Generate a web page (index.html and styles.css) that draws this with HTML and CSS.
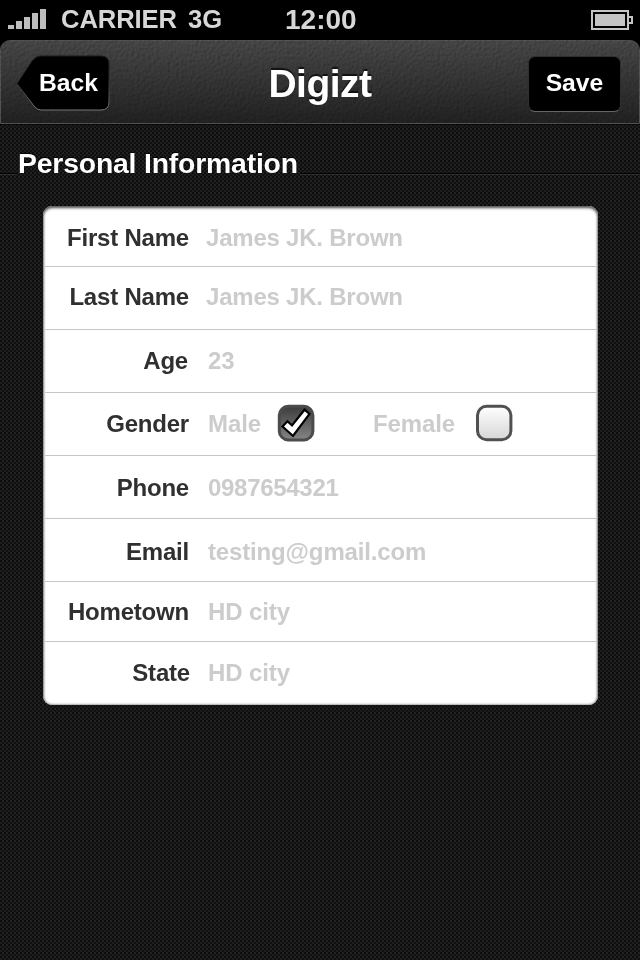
FILE: index.html
```html
<!DOCTYPE html>
<html lang="en">
<head>
<meta charset="utf-8">
<title>Digizt</title>
<link rel="stylesheet" href="styles.css">
</head>
<body>
<div class="status">
  <svg class="signal" width="38" height="20" viewBox="0 0 38 20"><path fill="#bdbdbd" d="M0 16h6v4H0zM8 12h6v8H8zM16 8h6v12h-6zM24 4h6v16h-6zM32 0h6v20h-6z"/></svg>
  <span class="carrier">CARRIER</span><span class="network">3G</span>
  <span class="clock">12:00</span>
  <svg class="battery" width="42" height="20" viewBox="0 0 42 20"><path d="M1 1h36v18H1zM37 7h4v6h-4" fill="none" stroke="#c4c4c4" stroke-width="2"/><path d="M4 4h30v12H4z" fill="#c4c4c4"/></svg>
</div>
<header class="navbar">
  <svg class="leather" width="640" height="84">
    <filter id="grain" x="0" y="0" width="100%" height="100%" color-interpolation-filters="sRGB">
      <feTurbulence type="fractalNoise" baseFrequency=".36 .32" numOctaves="2" seed="8"/>
      <feColorMatrix values="0 0 0 0 0  0 0 0 0 0  0 0 0 0 0  1 0 0 0 0"/>
      <feDiffuseLighting surfaceScale="1" diffuseConstant=".72" lighting-color="#ffffff"><feDistantLight azimuth="225" elevation="45"/></feDiffuseLighting>
    </filter>
    <rect width="640" height="84" filter="url(#grain)"/>
  </svg>
  <a class="back">
    <svg class="back-shape" width="94" height="56" viewBox="0 0 94 56"><defs><linearGradient id="edge" x2="0" y2="1"><stop stop-color="#191919"/><stop offset=".5" stop-color="#333"/><stop offset="1" stop-color="#777"/></linearGradient></defs><path d="M.8 28.500 16 6Q20 1 25 1H85Q93 1 93 9V47Q93 55 85 55H25Q21 55 18 51Z" fill="#000" stroke="url(#edge)"/></svg>
    <span>Back</span>
  </a>
  <h1>Digizt</h1>
  <a class="save">Save</a>
</header>
<main>
  <div class="section"><i class="rule lead"></i><h2>Personal Information</h2><i class="rule"></i></div>
  <div class="form">
    <div class="row first"><b>First Name</b><span>James JK. Brown</span></div>
    <div class="row last-name"><b>Last Name</b><span>James JK. Brown</span></div>
    <div class="row age"><b>Age</b><span>23</span></div>
    <div class="row gender"><b>Gender</b><span class="male">Male</span>
      <svg class="check" width="38" height="38" viewBox="0 0 38 38"><defs><linearGradient id="dark" x2="0" y2="1"><stop stop-color="#3c3c3c"/><stop offset="1" stop-color="#858585"/></linearGradient></defs><rect x="2.3" y="2.3" width="33.6" height="33.6" rx="9" fill="url(#dark)" stroke="#4b4b4b" stroke-width="3"/><path d="M5.500 22.500 10.500 17.300 15 21.500 27.500 5.700 32.500 10 16 32Z" fill="#fff" stroke="#000" stroke-width="2.2"/></svg>
      <span class="female">Female</span>
      <svg class="check" width="38" height="38" viewBox="0 0 38 38"><defs><linearGradient id="light" x2="0" y2="1"><stop stop-color="#fff"/><stop offset="1" stop-color="#d6d6d6"/></linearGradient></defs><rect x="2.5" y="2.3" width="33.4" height="33.4" rx="9" fill="url(#light)" stroke="#505050" stroke-width="3"/></svg>
    </div>
    <div class="row phone"><b>Phone</b><span>0987654321</span></div>
    <div class="row email"><b>Email</b><span>testing@gmail.com</span></div>
    <div class="row town"><b>Hometown</b><span>HD city</span></div>
    <div class="row state"><b>State</b><span>HD city</span></div>
  </div>
</main>
</body>
</html>
```
FILE: styles.css
```css
* { box-sizing: border-box; }
body {
  margin: 0;
  width: 640px;
  height: 960px;
  overflow: hidden;
  font-family: "Liberation Sans", Arial, sans-serif;
  font-weight: bold;
  background-color: #141414;
  background-image:
    conic-gradient(#222 25%, #101010 0 50%, #1d1d1d 0 75%, #0c0c0c 0);
  background-size: 4px 4px;
}
svg { display: block; flex: none; }
.status {
  display: flex;
  align-items: center;
  height: 40px;
  padding: 0 7px 0 8px;
  background: #000;
  color: #d7d7d7;
  font-size: 25.6px;
  line-height: 38px;
}
.signal { margin-bottom: 3px; }
.carrier, .network { margin-bottom: 2px; }
.carrier { width: 127px; margin-left: 15px; letter-spacing: -.1px; }
.network { width: 97px; }
.clock { font-size: 28px; }
.battery { margin-left: auto; }
.navbar {
  position: relative;
  display: flex;
  align-items: flex-start;
  justify-content: space-between;
  height: 85px;
  padding: 15px 19px 0 16px;
  color: #fff;
  background: #000;
  border-bottom: 1px solid #080808;
}
.navbar::before {
  content: "";
  position: absolute;
  inset: 0;
  background: linear-gradient(#444, #202020);
  border: 1px solid #505050;
  border-radius: 10px 10px 0 0;
}
.leather {
  position: absolute;
  left: 0;
  top: 0;
  border-radius: 10px 10px 0 0;
  mix-blend-mode: overlay;
  opacity: .36;
}
.back { position: relative; width: 94px; height: 56px; }
.back-shape { position: absolute; inset: 0; }
.back span {
  position: relative;
  display: block;
  padding-left: 23px;
  font-size: 24.7px;
  line-height: 55px;
}
h1 {
  position: relative;
  margin: 0 0 0 2px;
  font-size: 39px;
  letter-spacing: -.5px;
  line-height: 58px;
  text-shadow: 0 -2px 1px #111;
}
.save {
  position: relative;
  width: 93px;
  height: 56px;
  margin-top: 1px;
  border: 1px solid #303030;
  border-bottom-color: #666;
  border-radius: 7px;
  background: #000;
  text-align: center;
  font-size: 24.7px;
  line-height: 52px;
}
.section { display: flex; height: 81px; padding-top: 20px; }
h2 {
  margin: 0 2px 0 1px;
  color: #fff;
  font-size: 28.35px;
  letter-spacing: -.18px;
  line-height: 36px;
  white-space: nowrap;
  text-shadow: 0 -1px 1px #000;
}
.rule {
  flex: 1;
  height: 2px;
  margin-top: 28px;
  background: #000;
  border-bottom: 1px solid #303030;
}
.lead { flex: 0 0 16px; margin-right: 1px; }
.form {
  width: 555px;
  height: 499px;
  margin-left: 43px;
  background: #fff;
  border-radius: 9px;
  box-shadow: inset 0 2px 3px #555, inset 0 0 2px 1px #aaa;
}
.row {
  display: flex;
  align-items: center;
  height: 63px;
  margin: 0 2px;
  border-bottom: 1px solid #c5c5c5;
  font-size: 24px;
  letter-spacing: -.1px;
  line-height: 28px;
  color: #ccc;
}
.row b {
  width: 144px;
  margin-right: 19px;
  text-align: right;
  color: #303030;
  letter-spacing: -.2px;
}
.first b, .last-name b { margin-right: 17px; }
.first span, .last-name span { letter-spacing: -.22px; }
.first { height: 61px; padding-top: 4px; }
.town { height: 60px; padding-top: 1px; }
.state { border-bottom: 0; padding-bottom: 2px; }
.state b { width: 145px; margin-right: 18px; }
.age b { width: 143px; margin-right: 20px; }
.last-name { padding-bottom: 2px; }
.phone { padding-top: 2px; }
.phone span { letter-spacing: -.3px; }
.email { padding-top: 4px; }
.email span { letter-spacing: -.15px; }
.male { width: 69px; }
.female { width: 102px; margin-left: 58px; }
.check { margin-bottom: 2px; }
```
